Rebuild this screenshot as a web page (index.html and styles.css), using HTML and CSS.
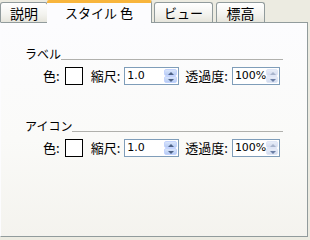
FILE: index.html
```html
<!DOCTYPE html>
<html>
<head>
<meta charset="utf-8">
<link rel="stylesheet" href="styles.css">
</head>
<body>
<div class="win">
  <div class="tabs">
    <div class="tab first">説明</div>
    <div class="tab active">スタイル 色</div>
    <div class="tab view">ビュー</div>
    <div class="tab elev">標高</div>
  </div>
  <div class="panel">
    <div class="group">
      <div class="legend"><span class="legend-text">ラベル</span><span class="legend-line"></span></div>
      <div class="row">
        <span class="lbl">色:</span>
        <span class="swatch"></span>
        <span class="lbl scale">縮尺:</span>
        <span class="spin wide"><span class="val">1.0</span><span class="btns"><span class="up"></span><span class="dn"></span></span></span>
        <span class="lbl opac">透過度:</span>
        <span class="spin narrow"><span class="val">100%</span><span class="btns dis"><span class="up"></span><span class="dn"></span></span></span>
      </div>
    </div>
    <div class="group second">
      <div class="legend"><span class="legend-text">アイコン</span><span class="legend-line"></span></div>
      <div class="row">
        <span class="lbl">色:</span>
        <span class="swatch"></span>
        <span class="lbl scale">縮尺:</span>
        <span class="spin wide"><span class="val">1.0</span><span class="btns"><span class="up"></span><span class="dn"></span></span></span>
        <span class="lbl opac">透過度:</span>
        <span class="spin narrow"><span class="val">100%</span><span class="btns dis"><span class="up"></span><span class="dn"></span></span></span>
      </div>
    </div>
  </div>
</div>
</body>
</html>
```
FILE: styles.css
```css
html, body {
  margin: 0;
  padding: 0;
}
body {
  width: 310px;
  height: 240px;
  background: #ecebe1;
  font-family: "Noto Sans CJK JP", "DejaVu Sans", sans-serif;
  font-size: 12px;
  color: #000;
  overflow: hidden;
}
.win {
  width: 310px;
  height: 240px;
  display: flex;
  flex-direction: column;
}
.tabs {
  display: flex;
  align-items: flex-end;
  height: 22px;
  position: relative;
  z-index: 2;
}
.tab {
  box-sizing: border-box;
  height: 20px;
  border: 1px solid #919b9c;
  border-bottom: none;
  border-radius: 3px 3px 0 0;
  background: linear-gradient(#ffffff, #f3f3ef 60%, #e6e5dc);
  display: flex;
  align-items: center;
  justify-content: center;
  font-size: 14px;
  line-height: 1;
}
.tab.first {
  width: 48px;
}
.tab.active {
  width: 105px;
  height: 23px;
  margin-bottom: -1px;
  margin-left: -1px;
  background: #fcfcfe;
  border-top: 3px solid #f8b53c;
  border-left: none;
  border-right: 1px solid #919b9c;
  border-radius: 2px 2px 0 0;
  font-size: 13px;
  padding-bottom: 2px;
}
.tab.view {
  width: 59px;
  margin-left: 2px;
  font-size: 13px;
}
.tab.elev {
  width: 49px;
  margin-left: 3px;
}
.panel {
  box-sizing: border-box;
  width: 308px;
  height: 215px;
  border: 1px solid #919b9c;
  border-left-color: #fcfcfe;
  background: linear-gradient(#fcfcfe, #fafaf8 55%, #f4f3ee);
  padding: 22px 24px 0 24px;
  position: relative;
  z-index: 1;
}
.group.second {
  margin-top: 32px;
}
.legend {
  display: flex;
  align-items: flex-end;
  height: 16px;
}
.legend-text {
  font-size: 12px;
  line-height: 14px;
}
.legend-line {
  flex: 1;
  border-bottom: 1px solid #b0b0ac;
  margin-bottom: 1px;
}
.row {
  display: flex;
  align-items: center;
  margin-top: 5px;
  padding-left: 18px;
  height: 19px;
}
.lbl {
  font-size: 13px;
  line-height: 1;
}
.swatch {
  box-sizing: border-box;
  width: 18px;
  height: 18px;
  border: 1px solid #000;
  background: #fff;
  margin-left: 5px;
}
.scale {
  margin-left: 8px;
}
.opac {
  margin-left: 6px;
}
.spin {
  box-sizing: border-box;
  display: flex;
  align-items: stretch;
  height: 18px;
  border: 1px solid #7f9db9;
  background: #fff;
  margin-left: 4px;
}
.spin.wide {
  width: 55px;
}
.spin.narrow {
  width: 48px;
}
.val {
  flex: 1;
  font-family: "DejaVu Sans", sans-serif;
  font-size: 11px;
  line-height: 16px;
  padding-left: 2px;
}
.btns {
  width: 13px;
  display: flex;
  flex-direction: column;
  margin: 1px 1px 1px 0;
}
.up, .dn {
  flex: 1;
  position: relative;
  background: linear-gradient(#d9e5fb, #b6cbf4);
  border: 1px solid #c3d3fd;
  border-radius: 2px;
  box-sizing: border-box;
}
.up::after, .dn::after {
  content: "";
  position: absolute;
  left: 3px;
  width: 0;
  height: 0;
  border-left: 3px solid transparent;
  border-right: 3px solid transparent;
}
.up::after {
  top: 2px;
  border-bottom: 3px solid #4d6185;
}
.dn::after {
  top: 2px;
  border-top: 3px solid #4d6185;
}
.btns.dis .up, .btns.dis .dn {
  background: linear-gradient(#e8edf8, #d2dbee);
  border-color: #dfe6f6;
}
.btns.dis .up::after {
  border-bottom-color: #a8b4cc;
}
.btns.dis .dn::after {
  border-top-color: #6b7fa6;
}
```
